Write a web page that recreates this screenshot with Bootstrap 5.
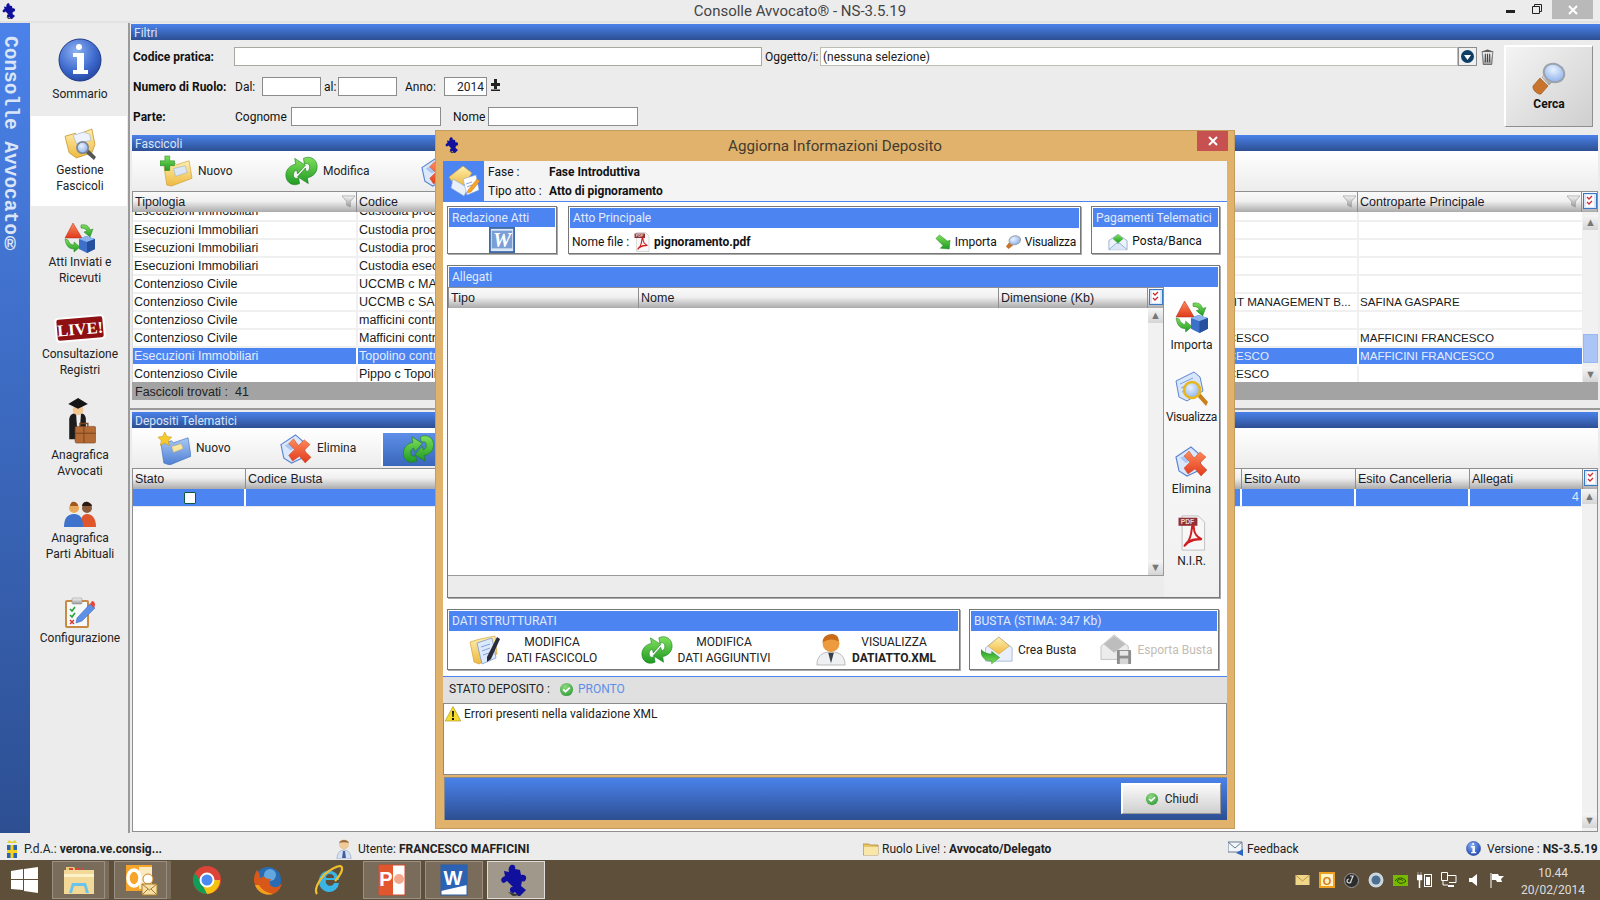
<!DOCTYPE html>
<html lang="it">
<head>
  <meta charset="UTF-8">
  <title>Consolle Avvocato</title>
  <link href="https://cdn.jsdelivr.net/npm/bootstrap@5.3.3/dist/css/bootstrap.min.css" rel="stylesheet">
  <style>
    html, body { margin: 0; width: 1600px; height: 900px; overflow: hidden; }
    body { position: relative; background: #ececec; color: #111; font: 12px/16px Roboto, "Open Sans", sans-serif; }
    svg { display: block; flex: none; }
    .svg-defs { width: 0; height: 0; }

    /* window chrome */
    .win-title { height: 23px; background: #ececec; border-bottom: 2px solid #e2e2e2; position: relative; }
    .win-title-text { text-align: center; font-size: 15px; line-height: 22px; color: #444; }
    .win-logo { position: absolute; left: 2px; top: 3px; }
    .win-btns { position: absolute; right: 7px; top: 0; height: 19px; }
    .win-min { width: 9px; height: 3px; background: #222; margin: 10px 17px 0 0; }
    .win-max { margin: 4px 10px 0 0; }
    .win-close { width: 41px; height: 19px; background: #b9b9b9; display: flex; align-items: center; justify-content: center; }

    .app-body { height: 810px; }
    .side-rail { width: 30px; background: linear-gradient(#4a82ea, #2d4f92); padding: 13px 0 0 0; overflow: hidden; flex: none; }
    .side-rail-text { writing-mode: vertical-rl; font: bold 19.500px/24px "Liberation Mono", monospace; color: #dbe5f8; white-space: nowrap; margin-left: -2px; }
    .side-menu { width: 100px; background: #ececec; border-right: 2px solid #9a9a9a; flex: none; }
    .side-item { text-align: center; display: flex; flex-direction: column; align-items: center; color: #222; margin: 0 1px; padding-left: 2px; }
    .si-1 { height: 93px; padding-top: 15px; } .si-1 svg { margin-bottom: 4px; }
    .si-2 { height: 90px; padding-top: 12px; background: #fff; } .si-2 svg { margin-bottom: 1px; }
    .si-3 { height: 94px; padding-top: 16px; }
    .si-4 { height: 85px; padding-top: 13px; } .si-4 svg { margin-bottom: 3px; }
    .si-5 { height: 105px; padding-top: 13px; } .si-5 svg { margin-bottom: 2px; }
    .si-6 { height: 95px; padding-top: 11px; } .si-6 svg { margin-bottom: 3px; }
    .si-7 { height: 60px; padding-top: 12px; } .si-7 svg { margin-bottom: 1px; }

    .main-area { width: 1470px; flex: none; padding-top: 1px; }
    .blue-head { height: 16px; background: linear-gradient(#4a82ea, #2d4f92); color: #d9e4f8; line-height: 18px; padding-left: 3px; }
    .head-filtri { margin-left: 1px; }
    .filter-wrap { height: 95px; padding: 7px 7px 0 2px; margin-left: 1px; }
    .filter-row { height: 19px; margin-bottom: 11px; align-items: center; white-space: nowrap; }
    .lb { font-weight: 700; }
    .w-101 { width: 101px; } .w-102 { width: 102px; } .w-27 { width: 27px; } .w-17 { width: 17px; padding-left: 3px; }
    .w-47 { width: 47px; padding-left: 8px; } .w-47b { width: 47px; padding-left: 12px; } .w-56 { width: 56px; }
    .w-oggetto { width: 58px; padding-left: 3px; }
    .fld.form-control { height: 19px; min-height: 0; padding: 0 2px; font-size: 12px; line-height: 17px; border-radius: 0; border: 1px solid #8c8c8c; color: #222; box-shadow: none; background: #fff; flex: none; }
    .fld-528.form-control { width: 528px; border-color: #a9a99f; }
    .fld-638.form-control { width: 638px; border-color: #bdbdb2; }
    .fld-59.form-control { width: 59px; }
    .fld-43.form-control { width: 43px; text-align: right; }
    .fld-150.form-control { width: 150px; }
    .combo-btn { width: 19px; height: 19px; background: #eef0f2; border: 1px solid #8c8c8c; display: flex; align-items: center; justify-content: center; }
    .bin-ico { margin-left: 3px; }
    .cerca-btn.btn { width: 89px; height: 82px; margin-top: -2px; padding: 14px 0 0; border-radius: 0; border: 1px solid #8f8f8f; border-top: 2px solid #fff; border-left: 2px solid #fff; background: linear-gradient(135deg, #f4f4f4, #cfcfcf); font: bold 12px/16px Roboto, sans-serif; color: #111; display: flex; flex-direction: column; align-items: center; flex: none; }
    .cerca-lbl { margin-top: 1px; }

    .panel-wrap { margin: 0 2px; }
    .tool-strip { height: 40px; background: linear-gradient(#fff, #ececec); align-items: center; white-space: nowrap; }
    .tool-btn { display: flex; align-items: center; gap: 5px; color: #222; }
    .tb-1 { margin-left: 28px; width: 125px; } .tb-2 { width: 135px; }
    .tb-3 { margin-left: 26px; width: 121px; } .tb-4 { width: 102px; }
    .tb-sel { width: 60px; height: 35px; padding-left: 19px; background: linear-gradient(#5d8fe9, #3a66ba); border-left: 2px solid #fff; border-top: 2px solid #fff; }

    .grid-head { height: 21px; display: flex; background: linear-gradient(#fafafa, #f0f0f0 45%, #ababab); border: 1px solid #8f8f8f; border-bottom: 0; font: 12.500px/20px "Liberation Sans", sans-serif; color: #1a1a2a; }
    .grid-th { border-right: 1px solid #8f8f8f; padding-left: 2px; position: relative; overflow: hidden; white-space: nowrap; flex: none; }
    .grid-th svg { position: absolute; right: 1px; top: 3px; }
    .grid-check { width: 14px; margin: 1px 0 0 1px; }
    .grid-scroll { height: 170px; overflow: hidden; position: relative; border-left: 1px solid #ddd; }
    .grid-tb.table { table-layout: fixed; width: 1450px; margin: -9px 0 0 0; font: 12.500px/16px "Liberation Sans", sans-serif; }
    .grid-tb.table td { height: 18px; padding: 0 1px; border: 0; border-right: 2px solid #f0f0f0; border-bottom: 2px solid #f0f0f0; white-space: nowrap; overflow: hidden; color: #1a1a1a; background: #fff; box-shadow: none; }
    .grid-tb.table td.cap-cell { font-size: 11.600px; padding-left: 1px; }
    .grid-tb.table td.cap-long { padding-left: 67px; }
    .grid-tb.table tr.row-on td { background: #4c84f2; color: #e6edfc; border-bottom-color: #fff; border-right-color: #fff; }
    .scroll-v { position: absolute; right: 0; top: 0; width: 15px; height: 100%; background: #f1f1f1; }
    .scroll-arrow { position: absolute; left: 0; width: 15px; height: 15px; background: linear-gradient(#f6f6f6, #d5d5d5); color: #777; display: flex; align-items: center; justify-content: center; font-size: 11px; }
    .scroll-arrow.up { top: 0; } .scroll-arrow.dn { bottom: 0; }
    .grid-scroll .scroll-arrow.up { top: 3px; }
    .dep-grid .scroll-arrow.dn { bottom: 3px; }
    .scroll-thumb { position: absolute; left: 0; top: 122px; width: 15px; height: 29px; background: #abc5f6; border: 1px solid #9bb8ee; }
    .grid-foot { height: 18px; background: #a3a3a3; padding-left: 3px; font: 12.500px/20px "Liberation Sans", sans-serif; color: #222; }
    .split-line { height: 10px; border-bottom: 2px solid #9a9a9a; margin: 0 -2px 2px; }

    .dep-grid { height: 343px; border: 1px solid #8f8f8f; border-top: 0; background: #fff; position: relative; }
    .dep-row { height: 18px; display: flex; background: #4c84f2; border-bottom: 1px solid #e8e8e8; margin-right: 15px; color: #dfe8fb; font: 12.500px/17px "Liberation Sans", sans-serif; }
    .dep-cell { border-right: 2px solid #fff; flex: none; padding-right: 2px; display: flex; align-items: center; justify-content: flex-end; }
    .dep-cell:first-child { padding: 0 0 0 3px; }
    .dep-box { width: 12px; height: 12px; background: #fff; border: 1px solid #0d5a3b; border-radius: 1px; margin: 0 auto; display: block; }

    /* status + taskbar */
    .status-row { height: 27px; align-items: center; background: #ececec; white-space: nowrap; color: #222; padding-top: 4px; }
    .status-item { display: flex; align-items: center; gap: 6px; flex: none; }
    .st-a { width: 336px; padding-left: 6px; } .st-b { width: 527px; } .st-c { width: 365px; gap: 3px; } .st-d { width: 238px; gap: 3px; }
    .task-bar { height: 40px; background: #5e4f3a; position: relative; padding-top: 1px; }
    .start-logo { margin: 6px 14px 0 11px; }
    .task-app { height: 38px; display: flex; align-items: center; justify-content: center; flex: none; }
    .ta-box { background: rgba(255,255,255,.17); border: 1px solid rgba(255,255,255,.24); }
    .ta-on { background: rgba(255,255,255,.42); border: 1px solid #ddd; }
    .ta-edge { width: 4px; background: rgba(255,255,255,.17); margin: 0 5px 0 0; }
    .ta-53 { width: 53px; } .ta-free { width: 61px; } .ta-58 { width: 58px; margin-right: 4px; }
    .tray-zone { position: absolute; right: 0; top: 0; height: 40px; padding-right: 7px; gap: 9px; }
    .clock-text { width: 80px; text-align: center; color: #ddd; line-height: 17px; padding-top: 4px; }

    /* dialog */
    .dlg { position: absolute; left: 435px; top: 130px; width: 800px; height: 699px; background: #e0b26c; border: 1px solid #c39b5c; padding: 0 7px; }
    .dlg-title { height: 30px; position: relative; text-align: center; font-size: 15.200px; line-height: 31px; color: #443c30; }
    .dlg-logo { position: absolute; left: 2px; top: 6px; }
    .dlg-close { position: absolute; right: -1px; top: 0; width: 31px; height: 20px; background: #c75050; display: flex; align-items: center; justify-content: center; }
    .dlg-top { height: 41px; background: #f4f4f4; border-bottom: 1px solid #4c84f2; }
    .dlg-top-ico { width: 41px; height: 40px; background: #4c84f2; display: flex; align-items: center; justify-content: center; }
    .dlg-top-txt { display: grid; grid-template-columns: 61px auto; grid-auto-rows: 19.500px; padding: 1px 0 0 4px; align-items: center; }
    .dlg-white { height: 474px; background: #fff; padding: 4px 6px 0 4px; }
    .box-pane { border: 1px solid #777; box-shadow: 1px 1px 0 #aaa; background: #fff; flex: none; }
    .box-head { height: 19px; background: #4c84f2; color: #e3ebfb; margin: 1px 1px 0; padding-left: 3px; line-height: 20px; }
    .bp-110 { width: 110px; height: 48px; } .bp-513 { width: 513px; height: 48px; margin: 0 10px 0 11px; } .bp-129 { width: 129px; height: 48px; }
    .bp-513 .box-head { height: 20px; line-height: 21px; }
    .box-line { height: 26px; align-items: center; white-space: nowrap; padding: 2px 4px 0 3px; }
    .file-name { margin-left: 3px; }
    .tight { letter-spacing: -.3px; }
    .alleg-pane { width: 773px; height: 333px; margin-top: 11px; border: 1px solid #777; box-shadow: 1px 1px 0 #aaa; }
    .alleg-pane .box-head { height: 20px; line-height: 20px; }
    .alleg-left { width: 716px; flex: none; }
    .alleg-grid { height: 268px; position: relative; border-bottom: 1px solid #999; border-right: 1px solid #999; }
    .alleg-gray { height: 21px; background: #ececec; }
    .alleg-tools { width: 55px; background: linear-gradient(#fff, #f0f0f0); padding-top: 12px; display: flex; flex-direction: column; align-items: center; color: #222; }
    .at-item { height: 72px; display: flex; flex-direction: column; align-items: center; }
    .at-item svg { height: 36px; margin-bottom: 2px; }
    .dati-row { margin-top: 11px; }
    .bp-dati { width: 513px; height: 61px; margin-right: 9px; }
    .bp-busta { width: 250px; height: 61px; }
    .bp-dati .box-head, .bp-busta .box-head { height: 20px; line-height: 21px; }
    .dati-cols { height: 38px; align-items: center; color: #222; }
    .dati-btn { display: flex; align-items: center; flex: none; text-align: center; line-height: 16px; }
    .db-1 { width: 155px; padding-left: 21px; } .db-2 { width: 172px; padding-left: 38px; } .db-3 { width: 167px; padding-left: 41px; }
    .db-txt { flex: 1; white-space: nowrap; }
    .busta-btn { display: flex; align-items: center; gap: 5px; flex: none; }
    .busta-cols { padding-left: 11px; }
    .dis-txt { color: #c3bcb3; }
    .stato-line { height: 27px; background: #e0e0e0; border-top: 1px solid #4c84f2; align-items: center; padding: 0 0 2px 6px; gap: 9px; color: #222; }
    .pronto-txt { color: #5e8fe8; }
    .msg-box { height: 72px; background: #fff; border: 1px solid #8a8a8a; padding: 2px 0 0 1px; display: flex; align-items: flex-start; gap: 3px; color: #222; }
    .dlg-bar { height: 43px; margin: 2px 0 0 1px; background: linear-gradient(#4a82ea, #2d4f92); border: 1px solid #8a8a8a; border-width: 1px 0 0 1px; position: relative; display: flex; justify-content: flex-end; padding: 5px 6px 0 0; }
    .chiudi-btn.btn { width: 100px; height: 31px; padding: 0; border-radius: 0; background: linear-gradient(#fafafa, #cfcfcf); border: 1px solid #999; border-top: 2px solid #fff; border-left: 2px solid #fff; font-size: 12px; color: #222; display: flex; align-items: center; justify-content: center; gap: 6px; }
  </style>
</head>
<body>
  <!-- shared icons -->
  <svg class="svg-defs" aria-hidden="true">
    <defs>
      <linearGradient id="gGold" x1="0" y1="0" x2="0" y2="1"><stop offset="0" stop-color="#fff0b0"/><stop offset="1" stop-color="#eeb93f"/></linearGradient>
      <linearGradient id="gBlueF" x1="0" y1="0" x2="0" y2="1"><stop offset="0" stop-color="#a9c8f5"/><stop offset="1" stop-color="#4d7fd4"/></linearGradient>
      <linearGradient id="gGreen" x1="0" y1="0" x2="0" y2="1"><stop offset="0" stop-color="#7fe05a"/><stop offset="1" stop-color="#1f9a24"/></linearGradient>
      <linearGradient id="gRed" x1="0" y1="0" x2="0" y2="1"><stop offset="0" stop-color="#ff8a5c"/><stop offset="1" stop-color="#e03a1c"/></linearGradient>
      <linearGradient id="gSilver" x1="0" y1="0" x2="0" y2="1"><stop offset="0" stop-color="#f5f5f5"/><stop offset="1" stop-color="#9a9a9a"/></linearGradient>
      <radialGradient id="gInfo" cx=".4" cy=".3" r=".8"><stop offset="0" stop-color="#8db2f2"/><stop offset=".6" stop-color="#3c68cc"/><stop offset="1" stop-color="#1f3f96"/></radialGradient>
      <radialGradient id="gOk" cx=".4" cy=".3" r=".8"><stop offset="0" stop-color="#8fd882"/><stop offset="1" stop-color="#2f9a38"/></radialGradient>
      <radialGradient id="gLens" cx=".4" cy=".35" r=".8"><stop offset="0" stop-color="#e8f2ff"/><stop offset="1" stop-color="#7ea6e8"/></radialGradient>
    </defs>
    <symbol id="ic-info" viewBox="0 0 44 44"><circle cx="22" cy="22" r="21" fill="url(#gInfo)" stroke="#1f3a86"/><circle cx="21" cy="9" r="3" fill="#fff"/><path d="M15 15h11v17h4v4H15v-4h4V19h-4z" fill="#fff"/></symbol>
    <symbol id="ic-folder-search" viewBox="0 0 32 32"><path d="M1 8l10-3 1 2 15-6 3 15-3 8-15 5-7-5z" fill="url(#gGold)" stroke="#c8962e" stroke-width=".8"/><path d="M9 7l10-3 6 2 1 6-14 3z" fill="#eef3fb" stroke="#9fb5d6" stroke-width=".6"/><path d="M21 24l3-3 7 7-2 3z" fill="#555"/><circle cx="18" cy="19" r="5.500" fill="url(#gLens)" stroke="#7b8596" stroke-width="1.600"/></symbol>
    <symbol id="ic-shapes" viewBox="0 0 32 32"><path d="M9 1l9 15H1z" fill="url(#gRed)" stroke="#b0301a" stroke-width=".5"/><path d="M17 3c5-1 8 1 9 5l3-1-3 8-6-5 3-1c-1-2-3-3-6-3z" fill="url(#gGreen)" stroke="#1a7e20" stroke-width=".5"/><path d="M1 17l3 1c1 3 3 5 6 5v-3l6 5-6 5v-3c-5 0-8-3-9-10z" fill="url(#gGreen)" stroke="#1a7e20" stroke-width=".5"/><path d="M15 17l7-3 9 3v10l-8 4-8-4z" fill="#3d70c8"/><path d="M15 17l8 3 8-3-9-3z" fill="#8bb4ef"/><path d="M23 20v11l8-4V17z" fill="#264f9e"/></symbol>
    <symbol id="ic-live" viewBox="0 0 52 30"><g transform="rotate(-5 26 15)"><rect x="2" y="4" width="48" height="23" rx="3" fill="#8e1012" stroke="#fff" stroke-width="2"/><text x="26" y="21.500" text-anchor="middle" font-family="Liberation Serif, serif" font-weight="700" font-size="16.500" fill="#fff">LIVE!</text></g></symbol>
    <symbol id="ic-lawyer" viewBox="0 0 32 48"><path d="M5 22c0-5 4-7 9-7s8 2 8 7v20H5z" fill="#1c1c1c"/><path d="M12 16h5l-1 14h-3z" fill="#eee"/><circle cx="14" cy="12" r="5.500" fill="#f2c690"/><path d="M14 0l10 6-10 5L4 6z" fill="#151515"/><rect x="11" y="29" width="21" height="17" rx="1.500" fill="#b46a34" stroke="#7a441e" stroke-width=".6"/><path d="M11 36h21M20 29v17" stroke="#7a441e"/><path d="M16 29v-3h8v3" fill="none" stroke="#7a441e" stroke-width="1.400"/></symbol>
    <symbol id="ic-people" viewBox="0 0 32 26"><circle cx="10" cy="7" r="5" fill="#e8a95c"/><path d="M8 1c3-1 6 1 6 4H6c0-2 1-3 2-4z" fill="#a05a1e"/><circle cx="23" cy="7" r="5" fill="#8a5a3a"/><path d="M18 5c0-3 3-5 6-4 2 1 4 2 4 4z" fill="#2c1a10"/><path d="M17 26c-1-8 1-13 6-13s9 4 9 13z" fill="#e0562c"/><path d="M0 26c0-8 3-13 10-13s9 5 9 13z" fill="#3f72cc"/></symbol>
    <symbol id="ic-clip" viewBox="0 0 32 32"><rect x="1" y="3" width="24" height="28" rx="2" fill="#c98a43"/><rect x="3" y="5" width="20" height="24" fill="#f6f8fa"/><rect x="8" y="1" width="10" height="6" rx="1" fill="url(#gSilver)" stroke="#888" stroke-width=".5"/><path d="M6 12l2 2 3-4M6 18l2 2 3-4" fill="none" stroke="#2aa33a" stroke-width="1.600"/><path d="M6 23l4 4M10 23l-4 4" stroke="#d8322a" stroke-width="1.400"/><path d="M13 21L26 7l5 4-13 13-6 2z" fill="#5e90e8" stroke="#2f5db0" stroke-width=".5"/><path d="M26 7l2-3c2 0 3 2 3 4l-1 3z" fill="#e8453a"/></symbol>
    <symbol id="ic-cerca" viewBox="0 0 34 34"><path d="M1 25l7-8 8 8-7 8c-3 1-9-4-8-8z" fill="#c8742c" stroke="#8e5320" stroke-width=".6"/><path d="M10 16l5-4 7 7-5 5z" fill="url(#gSilver)" stroke="#888" stroke-width=".5"/><ellipse cx="22" cy="12" rx="10.500" ry="9" transform="rotate(25 22 12)" fill="url(#gLens)" stroke="#9aa2ad" stroke-width="2"/></symbol>
    <symbol id="ic-folder-plus" viewBox="0 0 34 34"><path d="M4 11l11-3 2 2 13-4 3 18-21 8-5-1z" fill="url(#gGold)" stroke="#c8962e" stroke-width=".6"/><path d="M14 14l12-3 2 7-12 4z" fill="#dbe6f6" stroke="#8ea7c8" stroke-width=".5"/><path d="M5 1h5v5h5v5h-5v5H5v-5H0V6h5z" fill="url(#gGreen)" stroke="#1a7e20" stroke-width=".5"/></symbol>
    <symbol id="ic-arrows" viewBox="0 0 34 32"><path d="M19 3C25 0 32 3 33 10 34 17 29 22 23 23L24 29 13 22 21 13 22 17C25 16 26 13 25 10 24 8 22 8 20 9Z" fill="url(#gGreen)" stroke="#177a1d" stroke-width=".6"/><path d="M15 29C9 32 2 29 1 22 0 15 5 10 11 9L10 3 21 10 13 19 12 15C9 16 8 19 9 22 10 24 12 24 14 23Z" fill="url(#gGreen)" stroke="#177a1d" stroke-width=".6"/></symbol>
    <symbol id="ic-folder-star" viewBox="0 0 34 34"><path d="M3 12l11-3 2 2 15-5 3 19-22 9-6-2z" fill="url(#gBlueF)" stroke="#3c68b4" stroke-width=".6"/><path d="M14 15l10-3 2 5-10 4z" fill="#f7e6a4" stroke="#b59a4a" stroke-width=".4"/><path d="M7 0l2.200 4.600 5 .7-3.600 3.500.9 5L7 11.400 2.500 13.800l.9-5L-.2 5.300l5-.7z" fill="#f6c92c" stroke="#c08f10" stroke-width=".5"/></symbol>
    <symbol id="ic-del" viewBox="0 0 34 34"><path d="M2 13L17 3l7 6 4 16-15 7-8-5z" fill="#dbe7fa" stroke="#5d86d0" stroke-width="1.200"/><path d="M6 14l9-5 6 5-9 5z" fill="#a9c5f2"/><path d="M15 7l5 7 6-6 6 5-6 6 7 7-6 6-6-7-7 5-4-6 6-6-6-6z" fill="url(#gRed)" stroke="#bd3a1c" stroke-width=".4"/></symbol>
    <symbol id="ic-doc-search" viewBox="0 0 34 36"><path d="M2 10L20 1l6 5 3 14-16 10-8-4z" fill="#d8e5fa" stroke="#5d86d0" stroke-width="1"/><path d="M6 13l13-6M7 17l8-4M8 21l5-2" stroke="#7ea3de"/><path d="M23 25l3-3 8 9-2 4z" fill="#c9801d"/><circle cx="18" cy="19" r="8" fill="url(#gLens)" stroke="#e7b71f" stroke-width="2.600"/></symbol>
    <symbol id="ic-pdf" viewBox="0 0 32 40"><path d="M5 1h18l7 7v31H5z" fill="#f7f7f7" stroke="#bbb"/><path d="M1 3h21v9H1z" fill="#8f3236"/><text x="11" y="10.500" text-anchor="middle" font-family="Liberation Sans, sans-serif" font-weight="700" font-size="7.500" fill="#e9d5d5">PDF</text><path d="M8 34c4-3 7-10 8-20 0-3 2-3 2 0 0 6 4 11 9 13-6-1-11 0-16 3-2 2-4 5-3 4zM27 27c-5 0-11 1-16 4" fill="none" stroke="#cf1d20" stroke-width="2.200"/></symbol>
    <symbol id="ic-word" viewBox="0 0 28 28"><rect x="1" y="1" width="26" height="26" fill="#dbe6f6" stroke="#3f6aa8" stroke-width="2"/><rect x="3" y="4" width="22" height="19" fill="#7a9fd6"/><text x="14" y="21" text-anchor="middle" font-family="Liberation Serif, serif" font-style="italic" font-weight="700" font-size="22" fill="#fff">W</text></symbol>
    <symbol id="ic-green-arr" viewBox="0 0 18 18"><path d="M1 5l4-4 9 7 3-1-1 10-10-1 3-3z" fill="url(#gGreen)" stroke="#1a7e20" stroke-width=".5"/></symbol>
    <symbol id="ic-lens-s" viewBox="0 0 18 18"><path d="M1 14l4-5 4 4-5 4z" fill="#c8742c"/><ellipse cx="11" cy="7" rx="6.500" ry="5" transform="rotate(-15 11 7)" fill="url(#gLens)" stroke="#9aa2ad" stroke-width="1.200"/></symbol>
    <symbol id="ic-mail-green" viewBox="0 0 22 20"><path d="M1 9l10-7 10 7v10H1z" fill="#eef3fb" stroke="#7f9ccc" stroke-width=".8"/><path d="M5 7l6-5 6 5-6 5z" fill="url(#gGreen)"/><path d="M1 19l8-7h4l8 7" fill="#dbe6f6" stroke="#7f9ccc" stroke-width=".8"/></symbol>
    <symbol id="ic-mail-edit" viewBox="0 0 32 32"><path d="M1 12L15 1l9 7-9 13-9-1z" fill="url(#gGold)" stroke="#c8962e" stroke-width=".6"/><path d="M5 14l15 9-4 8-13-8z" fill="#eaf0fb" stroke="#8ba8d4" stroke-width=".6"/><path d="M15 14l13-4 3 15-12 5z" fill="#fff" stroke="#8ba8d4" stroke-width=".6"/><path d="M18 19l6-2M19 22l5-2" stroke="#8ba8d4"/><path d="M20 25l9-11 3 2-9 11-4 1z" fill="#f6a32e" stroke="#b87410" stroke-width=".4"/></symbol>
    <symbol id="ic-folder-edit" viewBox="0 0 32 32"><path d="M1 8l10-3 15-3 2 18-18 10-5-2z" fill="url(#gGold)" stroke="#c8962e" stroke-width=".6"/><path d="M8 9l15-5 4 20-14 6z" fill="#dce8fb" stroke="#6f91cc" stroke-width=".7"/><path d="M12 13l9-3M13 17l8-3M14 21l6-2" stroke="#7ea3de"/><path d="M18 23L28 3l3 2-9 20-4 3z" fill="#2a2a3a"/></symbol>
    <symbol id="ic-doctor" viewBox="0 0 32 34"><path d="M1 33c0-9 5-14 15-14s15 5 15 14z" fill="#eef0f2" stroke="#a8a8a8" stroke-width=".8"/><path d="M13 20h6l-3 11z" fill="#3a3f4a"/><circle cx="16" cy="10" r="9" fill="#ec9c3e"/><path d="M7 9c0-6 5-9 10-9s8 4 7 8c-5-3-11-3-17 1z" fill="#c96c1a"/></symbol>
    <symbol id="ic-mail-arrow" viewBox="0 0 36 34"><path d="M5 14L20 2l15 12v15H5z" fill="#e8effa" stroke="#7f9ccc" stroke-width=".7"/><path d="M8 12l12-10 12 10-12 9z" fill="url(#gGold)" stroke="#c8962e" stroke-width=".6"/><path d="M0 27c1-7 6-10 12-10v-3l9 7-9 7v-3c-4 0-8 1-12 5z" transform="matrix(1 0 0 -1 0 46)" fill="url(#gGreen)" stroke="#1a7e20" stroke-width=".5"/></symbol>
    <symbol id="ic-mail-disk" viewBox="0 0 34 34"><path d="M1 13L15 1l15 12v14H1z" fill="#ececec" stroke="#aaa" stroke-width=".7"/><path d="M4 11L15 2l12 9-12 9z" fill="#bdbdbd"/><rect x="18" y="17" width="15" height="15" rx="1" fill="#8d8d8d"/><rect x="21" y="18" width="9" height="5" fill="#e8e8e8"/><rect x="21" y="26" width="9" height="6" fill="#d6d6d6"/></symbol>
    <symbol id="ic-ok" viewBox="0 0 16 16"><circle cx="8" cy="8" r="7" fill="url(#gOk)"/><path d="M4.500 8l2.500 2.200L11.500 6" fill="none" stroke="#fff" stroke-width="1.800"/></symbol>
    <symbol id="ic-warn" viewBox="0 0 16 16"><path d="M8 .5L15.800 15H.2z" fill="#f7dc2e" stroke="#a58a10" stroke-width=".6"/><path d="M7 5h2l-.4 6H7.400z" fill="#111"/><rect x="7" y="12" width="2" height="2" fill="#111"/></symbol>
    <symbol id="ic-filter" viewBox="0 0 14 14"><path d="M0 1h14L9 7v6l-4-2V7z" fill="url(#gSilver)" stroke="#8c8c8c" stroke-width=".6"/></symbol>
    <symbol id="ic-checks" viewBox="0 0 14 16"><rect x=".5" y=".5" width="13" height="15" fill="#d9e6fa" stroke="#3b79c4"/><rect x="3" y="2" width="8" height="12" fill="#fff"/><path d="M4 4l2 2 3-3M4 9l2 2 3-3" fill="none" stroke="#d02a2a" stroke-width="1.300"/></symbol>
    <symbol id="ic-puzzle" viewBox="0 0 32 32"><path d="M11 1c3-1 5 1 4 4l5 1 1 5c3-1 6 1 5 4s-3 3-4 2l-1 5 5 4-7 7-4-5c-2 2-5 1-5-2s1-3 3-3l-6-6-3 2c-3 0-4-4-1-6l2-1-1-5 5 1c-1-2 0-6 2-7z" fill="#10109c"/><path d="M8 28l8 2 5 1-8 1z" fill="#333"/></symbol>
    <symbol id="ic-bin" viewBox="0 0 14 16"><path d="M2 3h10l-1 12H3z" fill="url(#gSilver)" stroke="#444" stroke-width=".6"/><path d="M1 3l6-2 6 2z" fill="#555"/><path d="M5 5v8M7 5v8M9 5v8" stroke="#444"/></symbol>
    <symbol id="ic-user-blue" viewBox="0 0 16 20"><circle cx="8" cy="5.500" r="5" fill="#eec99a"/><path d="M3 4c1-4 9-4 10 0-3-1-7-1-10 0z" fill="#9a6a3a"/><path d="M1 20c0-6 3-9 7-9s7 3 7 9z" fill="#d8e1f2" stroke="#8aa0c6" stroke-width=".6"/><path d="M7 12h2l1 7H6z" fill="#3f5f9f"/></symbol>
    <symbol id="ic-folder-s" viewBox="0 0 16 14"><path d="M0 2h6l1 1h8v10H0z" fill="#e9c468" stroke="#a9842c" stroke-width=".7"/><path d="M1 5h14v8H1z" fill="#f8e7a8"/></symbol>
    <symbol id="ic-crest" viewBox="0 0 12 20"><path d="M1 4l2-3 3 2 3-2 2 3z" fill="#e0d23a"/><rect x="1" y="6" width="10" height="13" fill="#2a62b4"/><path d="M4.500 6h3v13h-3zM1 11h10v3H1z" fill="#f4d21f"/></symbol>
    <symbol id="ic-feedback" viewBox="0 0 16 16"><path d="M0 1h14v10H0z" fill="#f2f5fa" stroke="#6a7a92"/><path d="M0 1l7 6 7-6" fill="none" stroke="#6a7a92"/><path d="M15 8v7l-7-3z" fill="#2f66bd"/></symbol>
  </svg>

  <!-- title bar -->
  <div class="win-title">
    <svg class="win-logo" width="16" height="16"><use href="#ic-puzzle"/></svg>
    <div class="win-title-text">Consolle Avvocato® - NS-3.5.19</div>
    <div class="win-btns d-flex">
      <div class="win-min"></div>
      <svg class="win-max" width="10" height="10" viewBox="0 0 10 10"><path d="M2.500 2.500V.5h7v7h-2M.5 2.500h7v7h-7z" fill="none" stroke="#222"/></svg>
      <div class="win-close"><svg width="10" height="10" viewBox="0 0 10 10"><path d="M1 1l8 8M9 1l-8 8" stroke="#fff" stroke-width="2"/></svg></div>
    </div>
  </div>

  <div class="app-body d-flex">
    <div class="side-rail"><div class="side-rail-text">Consolle Avvocato®</div></div>

    <div class="side-menu">
      <div class="side-item si-1"><svg width="44" height="44"><use href="#ic-info"/></svg><span>Sommario</span></div>
      <div class="side-item si-2"><svg width="33" height="33"><use href="#ic-folder-search"/></svg><span>Gestione<br>Fascicoli</span></div>
      <div class="side-item si-3"><svg width="32" height="32"><use href="#ic-shapes"/></svg><span>Atti Inviati e<br>Ricevuti</span></div>
      <div class="side-item si-4"><svg width="52" height="30"><use href="#ic-live"/></svg><span>Consultazione<br>Registri</span></div>
      <div class="side-item si-5"><svg width="32" height="47"><use href="#ic-lawyer"/></svg><span>Anagrafica<br>Avvocati</span></div>
      <div class="side-item si-6"><svg width="32" height="26"><use href="#ic-people"/></svg><span>Anagrafica<br>Parti Abituali</span></div>
      <div class="side-item si-7"><svg width="32" height="32"><use href="#ic-clip"/></svg><span>Configurazione</span></div>
    </div>

    <div class="main-area">
      <div class="blue-head head-filtri">Filtri</div>
      <div class="filter-wrap d-flex">
        <div class="flex-grow-1">
          <div class="filter-row d-flex">
            <span class="lb w-101">Codice pratica:</span>
            <input class="form-control fld fld-528" type="text">
            <span class="w-oggetto">Oggetto/i:</span>
            <input class="form-control fld fld-638" type="text" value="(nessuna selezione)">
            <span class="combo-btn"><svg width="13" height="13" viewBox="0 0 13 13"><circle cx="6.500" cy="6.500" r="6.500" fill="#0e3d66"/><path d="M3 5h7L6.500 10z" fill="#fff"/></svg></span>
            <svg class="bin-ico" width="15" height="18"><use href="#ic-bin"/></svg>
          </div>
          <div class="filter-row d-flex">
            <span class="lb w-102">Numero di Ruolo:</span>
            <span class="w-27">Dal:</span>
            <input class="form-control fld fld-59" type="text">
            <span class="w-17">al:</span>
            <input class="form-control fld fld-59" type="text">
            <span class="w-47">Anno:</span>
            <input class="form-control fld fld-43" type="text" value="2014">
            <svg class="ms-1 mb-1" width="9" height="12" viewBox="0 0 9 12"><path d="M3 0h3v4h3v3H6v3H3V7H0V4h3zM0 10.500h9V12H0z" fill="#222"/></svg>
          </div>
          <div class="filter-row d-flex">
            <span class="lb w-102">Parte:</span>
            <span class="w-56">Cognome</span>
            <input class="form-control fld fld-150" type="text">
            <span class="w-47b">Nome</span>
            <input class="form-control fld fld-150" type="text">
          </div>
        </div>
        <button class="btn cerca-btn" type="button"><svg width="36" height="34"><use href="#ic-cerca"/></svg><span class="cerca-lbl">Cerca</span></button>
      </div>

      <div class="panel-wrap">
        <div class="blue-head">Fascicoli</div>
        <div class="tool-strip d-flex">
          <div class="tool-btn tb-1"><svg width="33" height="33"><use href="#ic-folder-plus"/></svg>Nuovo</div>
          <div class="tool-btn tb-2"><svg width="33" height="32"><use href="#ic-arrows"/></svg>Modifica</div>
          <div class="tool-btn"><svg width="33" height="33"><use href="#ic-del"/></svg>Elimina</div>
        </div>
        <div class="grid-head">
          <div class="grid-th" style="width:224px">Tipologia<svg width="13" height="13"><use href="#ic-filter"/></svg></div>
          <div class="grid-th" style="width:400px">Codice</div>
          <div class="grid-th" style="width:376px">Oggetto</div>
          <div class="grid-th" style="width:225px">Parte Principale<svg width="13" height="13"><use href="#ic-filter"/></svg></div>
          <div class="grid-th" style="width:224px">Controparte Principale<svg width="13" height="13"><use href="#ic-filter"/></svg></div>
          <svg class="grid-check" width="13" height="16"><use href="#ic-checks"/></svg>
        </div>
        <div class="grid-scroll">
          <table class="table grid-tb">
            <colgroup><col style="width:224px"><col style="width:400px"><col style="width:376px"><col style="width:225px"><col style="width:225px"></colgroup>
            <tbody>
              <tr><td>Esecuzioni Immobiliari</td><td>Custodia proc</td><td></td><td></td><td></td></tr>
              <tr><td>Esecuzioni Immobiliari</td><td>Custodia proc</td><td></td><td></td><td></td></tr>
              <tr><td>Esecuzioni Immobiliari</td><td>Custodia proc</td><td></td><td></td><td></td></tr>
              <tr><td>Esecuzioni Immobiliari</td><td>Custodia esec</td><td></td><td></td><td></td></tr>
              <tr><td>Contenzioso Civile</td><td>UCCMB c MAr</td><td></td><td></td><td></td></tr>
              <tr><td>Contenzioso Civile</td><td>UCCMB c SAF</td><td></td><td class="cap-cell cap-long">CREDIT MANAGEMENT B...</td><td class="cap-cell">SAFINA GASPARE</td></tr>
              <tr><td>Contenzioso Civile</td><td>mafficini contr</td><td></td><td></td><td></td></tr>
              <tr><td>Contenzioso Civile</td><td>Mafficini contro</td><td></td><td class="cap-cell">MAFFICINI FRANCESCO</td><td class="cap-cell">MAFFICINI FRANCESCO</td></tr>
              <tr class="row-on"><td>Esecuzioni Immobiliari</td><td>Topolino contr</td><td></td><td class="cap-cell">MAFFICINI FRANCESCO</td><td class="cap-cell">MAFFICINI FRANCESCO</td></tr>
              <tr><td>Contenzioso Civile</td><td>Pippo c Topoli</td><td></td><td class="cap-cell">MAFFICINI FRANCESCO</td><td></td></tr>
            </tbody>
          </table>
          <div class="scroll-v">
            <div class="scroll-arrow up">▲</div>
            <div class="scroll-thumb"></div>
            <div class="scroll-arrow dn">▼</div>
          </div>
        </div>
        <div class="grid-foot">Fascicoli trovati :&nbsp; 41</div>
        <div class="split-line"></div>
        <div class="blue-head">Depositi Telematici</div>
        <div class="tool-strip d-flex">
          <div class="tool-btn tb-3"><svg width="33" height="33"><use href="#ic-folder-star"/></svg>Nuovo</div>
          <div class="tool-btn tb-4"><svg width="33" height="33"><use href="#ic-del"/></svg>Elimina</div>
          <div class="tool-btn tb-sel"><svg width="33" height="30"><use href="#ic-arrows"/></svg></div>
        </div>
        <div class="grid-head">
          <div class="grid-th" style="width:113px">Stato</div>
          <div class="grid-th" style="width:996px">Codice Busta</div>
          <div class="grid-th" style="width:114px">Esito Auto</div>
          <div class="grid-th" style="width:114px">Esito Cancelleria</div>
          <div class="grid-th" style="width:113px">Allegati</div>
          <svg class="grid-check" width="13" height="16"><use href="#ic-checks"/></svg>
        </div>
        <div class="dep-grid">
          <div class="dep-row">
            <div class="dep-cell" style="width:113px"><span class="dep-box"></span></div>
            <div class="dep-cell" style="width:996px"></div>
            <div class="dep-cell" style="width:114px"></div>
            <div class="dep-cell" style="width:114px"></div>
            <div class="dep-cell" style="width:113px">4</div>
          </div>
          <div class="scroll-v">
            <div class="scroll-arrow up">▲</div>
            <div class="scroll-arrow dn">▼</div>
          </div>
        </div>
      </div>
    </div>
  </div>

  <!-- status bar -->
  <div class="status-row d-flex">
    <div class="status-item st-a"><svg width="12" height="20"><use href="#ic-crest"/></svg><span>P.d.A.: <b>verona.ve.consig...</b></span></div>
    <div class="status-item st-b"><svg width="16" height="20"><use href="#ic-user-blue"/></svg><span>Utente: <b>FRANCESCO MAFFICINI</b></span></div>
    <div class="status-item st-c"><svg width="16" height="14"><use href="#ic-folder-s"/></svg><span>Ruolo Live! : <b>Avvocato/Delegato</b></span></div>
    <div class="status-item st-d"><svg width="16" height="16"><use href="#ic-feedback"/></svg><span>Feedback</span></div>
    <div class="status-item"><svg width="15" height="15" viewBox="0 0 44 44"><use href="#ic-info"/></svg><span>Versione : <b>NS-3.5.19</b></span></div>
  </div>

  <!-- taskbar -->
  <div class="task-bar d-flex">
    <svg class="start-logo" width="27" height="26" viewBox="0 0 27 26"><path d="M0 4l12-2v10H0zM13 2l14-2v12H13zM0 13h12v10L0 22zM13 13h14v13l-14-2z" fill="#fff"/></svg>
    <div class="task-app ta-box ta-53"><svg width="32" height="30" viewBox="0 0 32 30"><path d="M1 5h30v24H1z" fill="#f2d998"/><path d="M3 2h8l2 3H3z" fill="#e9cb78"/><path d="M6 4h4M12 4h4M18 4h3" stroke-width="2" stroke="#d9473a"/><path d="M1 9h30v3H1z" fill="#fdf1c8"/><path d="M6 28l3-10h14l3 10h-3l-2-7H11l-2 7z" fill="#6ac3ec"/></svg></div>
    <div class="task-app ta-edge"></div>
    <div class="task-app ta-box ta-53"><svg width="34" height="32" viewBox="0 0 34 32"><rect x="2" y="1" width="26" height="26" fill="#f6a52a"/><rect x="15" y="3" width="13" height="22" fill="#fbeac0"/><ellipse cx="10" cy="14" rx="6" ry="8" fill="none" stroke="#fff" stroke-width="3.500"/><circle cx="24" cy="15" r="5" fill="#fff" stroke="#d58218"/><path d="M18 20h15v11H18z" fill="#f7dfa4" stroke="#a77c2c"/><path d="M18 20l7.500 6 7.500-6M18 31l6-6M33 31l-6-6" fill="none" stroke="#a77c2c"/></svg></div>
    <div class="task-app ta-edge"></div>
    <div class="task-app ta-free"><svg width="30" height="30" viewBox="0 0 30 30"><circle cx="15" cy="15" r="14" fill="#db4437"/><path d="M15 15h13a14 14 0 0 1-13 14L8 22z" fill="#f4c20d"/><path d="M15 29A14 14 0 0 1 3 8l6 9 6 12z" fill="#0f9d58"/><circle cx="15" cy="15" r="6.500" fill="#4b8af0" stroke="#fff" stroke-width="2"/></svg></div>
    <div class="task-app ta-free"><svg width="31" height="31" viewBox="0 0 31 31"><circle cx="16" cy="15" r="13" fill="#2a6cb4"/><circle cx="18" cy="10" r="6" fill="#62a7e0"/><path d="M5 5c-3 5-4 10-2 15 3 8 11 11 18 9 5-2 8-6 9-11-2 3-5 5-8 4-5-1-5-5-3-8-4 0-7-1-8-4 0 2-1 3-3 3 0-3-1-6-3-8z" fill="#d8581a"/><path d="M3 20c3 8 11 11 18 9-4-1-11-3-14-9z" fill="#f1a11e"/></svg></div>
    <div class="task-app ta-free me-1"><svg width="30" height="30" viewBox="0 0 30 30"><path d="M5 16a10 10 0 0 1 20-1H12a4 4 0 0 0 8 3h5a10 10 0 0 1-20-2zm7-3h8a4 4 0 0 0-8 0z" fill="#3bb4e8"/><path d="M27 1c3 3-1 10-6 15M3 29c-3-4 1-13 8-20 5-4 12-8 16-8" fill="none" stroke="#f0c02c" stroke-width="2.200"/></svg></div>
    <div class="task-app ta-box ta-58"><svg width="28" height="32" viewBox="0 0 28 32"><rect x="1" y="1" width="26" height="30" fill="#fff" stroke="#d04a2c"/><path d="M1 1h14v30H1z" fill="#e2562e"/><text x="8" y="22" text-anchor="middle" font-family="Liberation Sans, sans-serif" font-weight="700" font-size="20" fill="#fff">P</text><circle cx="21" cy="15" r="5" fill="#f5a98c"/></svg></div>
    <div class="task-app ta-box ta-58"><svg width="28" height="32" viewBox="0 0 28 32"><rect x="1" y="1" width="26" height="30" fill="#fff" stroke="#2a5ca8"/><path d="M1 1h26v20L1 27z" fill="#2b62b4"/><text x="13" y="21" text-anchor="middle" font-family="Liberation Sans, sans-serif" font-weight="700" font-size="20" fill="#fff">W</text></svg></div>
    <div class="task-app ta-on ta-58"><svg width="32" height="32"><use href="#ic-puzzle"/></svg></div>

    <div class="tray-zone d-flex align-items-center">
      <svg width="15" height="10" viewBox="0 0 14 10"><path d="M0 0h14v10H0z" fill="#f0d688"/><path d="M0 0l7 6 7-6" fill="none" stroke="#b99a48"/></svg>
      <svg width="16" height="16" viewBox="0 0 16 16"><rect width="16" height="16" fill="#f0a01e"/><rect x="2" y="2" width="12" height="12" fill="#fff3c8"/><text x="8" y="13" text-anchor="middle" font-family="Liberation Sans, sans-serif" font-weight="700" font-size="11" fill="#d67c10">O</text></svg>
      <svg width="15" height="15" viewBox="0 0 15 15"><circle cx="7.500" cy="7.500" r="7" fill="#2c2c2c" stroke="#999"/><path d="M6 3h3l-2 5a2 2 0 1 1-2-2" fill="none" stroke="#ddd" stroke-width="1.200"/></svg>
      <svg width="16" height="16" viewBox="0 0 16 16"><circle cx="8" cy="8" r="7.500" fill="#ccd6df"/><circle cx="8" cy="8" r="4.500" fill="#49718f"/></svg>
      <svg width="15" height="11" viewBox="0 0 15 11"><rect width="15" height="11" fill="#76b900"/><path d="M2 6c3-4 8-4 11 0-3 3-7 3-9 0 2-2 5-2 6 0" fill="none" stroke="#2b4a00"/></svg>
      <svg width="15" height="16" viewBox="0 0 15 16"><path d="M1 0v3M4 0v3M0 3h5v5H3v8H2V8H0z" fill="#fff" stroke="#fff" stroke-width=".5"/><rect x="7.500" y="2.500" width="7" height="12" fill="none" stroke="#fff"/><rect x="9" y="5" width="4" height="8" fill="#fff"/></svg>
      <svg width="16" height="16" viewBox="0 0 16 16"><path d="M.5.5h6v8h-6zM2 9v4h5M6 3.500h9v7H8" fill="none" stroke="#fff"/><path d="M7 14h6" stroke="#fff" stroke-width="2"/></svg>
      <svg width="15" height="14" viewBox="0 0 9 14"><path d="M0 5h3l5-4v12L3 9H0z" fill="#fff"/></svg>
      <svg width="14" height="15" viewBox="0 0 14 15"><path d="M1 0v15" stroke="#fff"/><path d="M2 1h6l1 2h5l-3 3 1 3H7L6 7H2z" fill="#fff"/></svg>
      <div class="clock-text">10.44<br>20/02/2014</div>
    </div>
  </div>

  <!-- dialog -->
  <div class="dlg">
    <div class="dlg-title">
      <svg class="dlg-logo" width="16" height="16"><use href="#ic-puzzle"/></svg>
      Aggiorna Informazioni Deposito
      <div class="dlg-close"><svg width="10" height="10" viewBox="0 0 10 10"><path d="M1 1l8 8M9 1l-8 8" stroke="#fff" stroke-width="2"/></svg></div>
    </div>
    <div class="dlg-top d-flex">
      <div class="dlg-top-ico"><svg width="32" height="32"><use href="#ic-mail-edit"/></svg></div>
      <div class="dlg-top-txt"><span>Fase :</span><b>Fase Introduttiva</b><span>Tipo atto :</span><b>Atto di pignoramento</b></div>
    </div>
    <div class="dlg-white">
      <div class="d-flex">
        <div class="box-pane bp-110">
          <div class="box-head">Redazione Atti</div>
          <div class="d-flex justify-content-center"><svg width="26" height="26"><use href="#ic-word"/></svg></div>
        </div>
        <div class="box-pane bp-513">
          <div class="box-head">Atto Principale</div>
          <div class="box-line d-flex">
            <span>Nome file :</span>
            <svg class="ms-1" width="18" height="20"><use href="#ic-pdf"/></svg>
            <b class="file-name">pignoramento.pdf</b>
            <span class="ms-auto d-flex align-items-center gap-1"><svg width="16" height="16"><use href="#ic-green-arr"/></svg>Importa</span>
            <span class="ms-2 d-flex align-items-center gap-1 tight"><svg width="16" height="16"><use href="#ic-lens-s"/></svg>Visualizza</span>
          </div>
        </div>
        <div class="box-pane bp-129">
          <div class="box-head">Pagamenti Telematici</div>
          <div class="box-line d-flex justify-content-center gap-1"><svg width="20" height="19"><use href="#ic-mail-green"/></svg>Posta/Banca</div>
        </div>
      </div>

      <div class="alleg-pane">
        <div class="box-head">Allegati</div>
        <div class="d-flex">
          <div class="alleg-left">
            <div class="grid-head">
              <div class="grid-th" style="width:190px">Tipo</div>
              <div class="grid-th" style="width:360px">Nome</div>
              <div class="grid-th" style="width:149px">Dimensione (Kb)</div>
              <svg class="grid-check" width="13" height="16"><use href="#ic-checks"/></svg>
            </div>
            <div class="alleg-grid">
              <div class="scroll-v">
                <div class="scroll-arrow up">▲</div>
                <div class="scroll-arrow dn">▼</div>
              </div>
            </div>
            <div class="alleg-gray"></div>
          </div>
          <div class="alleg-tools">
            <div class="at-item"><svg width="34" height="36"><use href="#ic-shapes"/></svg>Importa</div>
            <div class="at-item tight"><svg width="34" height="36"><use href="#ic-doc-search"/></svg>Visualizza</div>
            <div class="at-item"><svg width="34" height="36"><use href="#ic-del"/></svg>Elimina</div>
            <div class="at-item"><svg width="30" height="36"><use href="#ic-pdf"/></svg>N.I.R.</div>
          </div>
        </div>
      </div>

      <div class="dati-row d-flex">
        <div class="box-pane bp-dati">
          <div class="box-head">DATI STRUTTURATI</div>
          <div class="dati-cols d-flex">
            <div class="dati-btn db-1"><svg width="32" height="32"><use href="#ic-folder-edit"/></svg><span class="db-txt">MODIFICA<br>DATI FASCICOLO</span></div>
            <div class="dati-btn db-2"><svg width="32" height="30"><use href="#ic-arrows"/></svg><span class="db-txt">MODIFICA<br>DATI AGGIUNTIVI</span></div>
            <div class="dati-btn db-3"><svg width="30" height="32"><use href="#ic-doctor"/></svg><span class="db-txt">VISUALIZZA<br><b>DATIATTO.XML</b></span></div>
          </div>
        </div>
        <div class="box-pane bp-busta">
          <div class="box-head">BUSTA (STIMA: 347 Kb)</div>
          <div class="dati-cols busta-cols d-flex">
            <div class="busta-btn me-4"><svg width="32" height="31"><use href="#ic-mail-arrow"/></svg>Crea Busta</div>
            <div class="busta-btn dis-txt"><svg width="32" height="32"><use href="#ic-mail-disk"/></svg>Esporta Busta</div>
          </div>
        </div>
      </div>
    </div>
    <div class="stato-line d-flex">
      <span>STATO DEPOSITO :</span>
      <span class="d-flex align-items-center gap-1"><svg width="15" height="15"><use href="#ic-ok"/></svg><span class="pronto-txt">PRONTO</span></span>
    </div>
    <div class="msg-box"><svg width="16" height="16"><use href="#ic-warn"/></svg>Errori presenti nella validazione XML</div>
    <div class="dlg-bar">
      <button class="btn chiudi-btn" type="button"><svg width="14" height="14"><use href="#ic-ok"/></svg>Chiudi</button>
    </div>
  </div>

  <script src="https://cdn.jsdelivr.net/npm/bootstrap@5.3.3/dist/js/bootstrap.bundle.min.js"></script>
</body>
</html>
